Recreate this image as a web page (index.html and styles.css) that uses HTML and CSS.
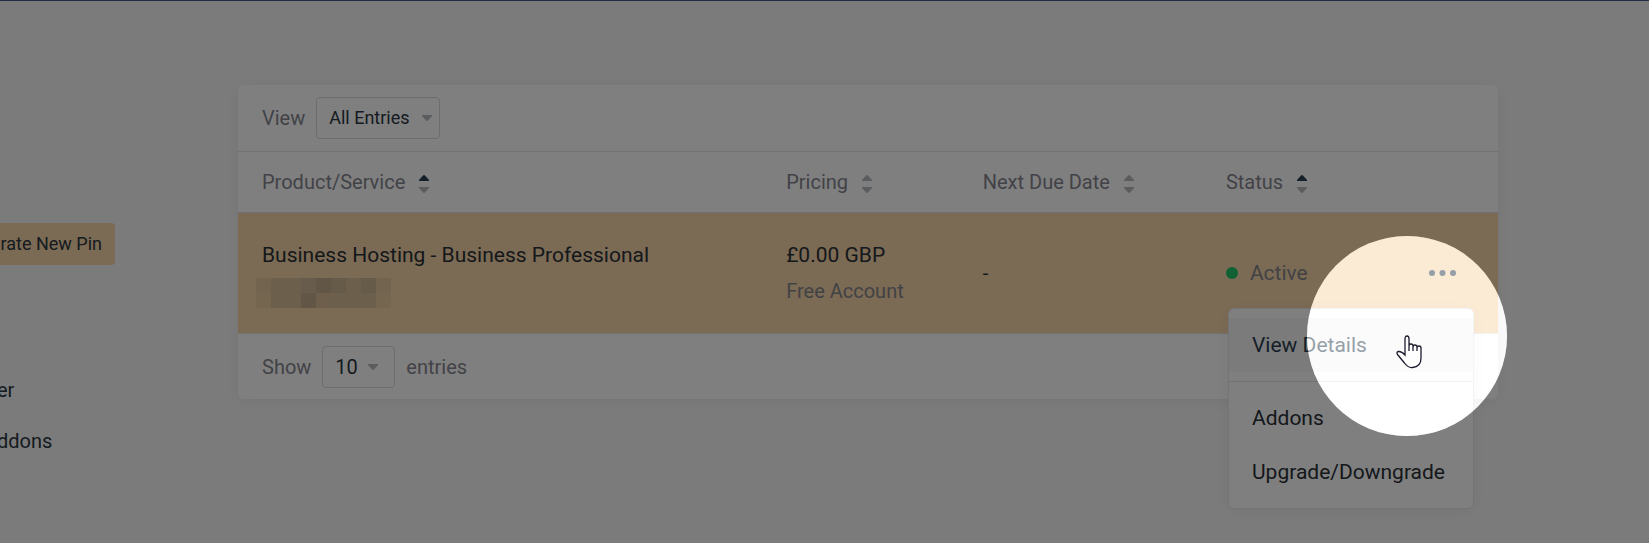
FILE: index.html
```html
<!DOCTYPE html>
<html lang="en">
<head>
    <meta charset="UTF-8">
    <meta name="viewport" content="width=device-width, initial-scale=1.0">
    <title>My Services</title>
    <link rel="stylesheet" href="styles.css">
</head>
<body>

    <div class="page">
        <aside class="sidebar">
            <button type="button" class="pin-btn">rate New Pin</button>
            <nav class="side-nav">
                <a href="#">er</a>
                <a href="#">ddons</a>
            </nav>
        </aside>

        <main class="card">
            <div class="toolbar">
                <label for="view">View</label>
                <div class="select select-view">
                    <select id="view">
                        <option>All Entries</option>
                    </select>
                    <svg class="caret" width="10" height="6" viewBox="0 0 10 6"><path d="M0 0v1l4 4.500q1 .8 2 0L10 1V0z"/></svg>
                </div>
            </div>

            <table class="services">
                <thead>
                    <tr>
                        <th class="col-product">Product/Service <svg class="sort asc" width="10" height="18" viewBox="0 0 10 18"><path class="up" d="M0 6V5l4-4.500q1-.8 2 0L10 5v1z"/><path class="down" d="M0 12v1l4 4.500q1 .8 2 0L10 13v-1z"/></svg></th>
                        <th class="col-pricing">Pricing <svg class="sort" width="10" height="18" viewBox="0 0 10 18"><path class="up" d="M0 6V5l4-4.500q1-.8 2 0L10 5v1z"/><path class="down" d="M0 12v1l4 4.500q1 .8 2 0L10 13v-1z"/></svg></th>
                        <th class="col-due">Next Due Date <svg class="sort" width="10" height="18" viewBox="0 0 10 18"><path class="up" d="M0 6V5l4-4.500q1-.8 2 0L10 5v1z"/><path class="down" d="M0 12v1l4 4.500q1 .8 2 0L10 13v-1z"/></svg></th>
                        <th class="col-status">Status <svg class="sort asc" width="10" height="18" viewBox="0 0 10 18"><path class="up" d="M0 6V5l4-4.500q1-.8 2 0L10 5v1z"/><path class="down" d="M0 12v1l4 4.500q1 .8 2 0L10 13v-1z"/></svg></th>
                    </tr>
                </thead>
                <tbody>
                    <tr>
                        <td>
                            <div class="name">Business Hosting - Business Professional</div>
                            <div class="domain">
                                <svg width="135" height="30" viewBox="0 0 135 30" shape-rendering="crispEdges">
                                    <path fill="#e4c89e" d="M0 0h15v15H0zM120 0h15v15h-15z"/>
                                    <path fill="#eacda0" d="M0 15h15v15H0zM120 15h15v15h-15z"/>
                                    <path fill="#d8c099" d="M15 0h30v30H15zM75 15h45v15H75zM90 0h15v15H90z"/>
                                    <path fill="#d0ba98" d="M45 0h15v15H45z"/>
                                    <path fill="#c4ae8f" d="M60 0h15v15H60zM45 15h15v15H45z"/>
                                    <path fill="#ccb692" d="M75 0h15v15H75zM105 0h15v15h-15z"/>
                                    <path fill="#dcbe98" d="M60 15h15v15H60z"/>
                                </svg>
                            </div>
                        </td>
                        <td>
                            <div class="name">£0.00 GBP</div>
                            <div class="note">Free Account</div>
                        </td>
                        <td>-</td>
                        <td class="status-cell">
                            <div class="status">
                                <span class="dot"></span>
                                <span class="note name">Active</span>
                                <button type="button" class="more" aria-label="Actions"><svg width="27" height="6" viewBox="0 0 27 6"><circle cx="3" cy="3" r="3"/><circle cx="13.500" cy="3" r="3"/><circle cx="24" cy="3" r="3"/></svg></button>
                            </div>
                            <div class="menu">
                                <a href="#" class="active">View Details</a>
                                <hr>
                                <a href="#">Addons</a>
                                <a href="#">Upgrade/Downgrade</a>
                            </div>
                            <div class="spotlight"></div>
                            <svg class="pointer" width="26" height="34" viewBox="0 0 26 34"><path d="M9 20V4Q9 1 11 1t2 3v12V11q0-2 2-2t2 2v5v-4q0-2 2-2t2 2v4v-3q0-2 2-2t2 2V23q0 9-8.500 9.500Q12 33 8.500 28L1.500 19.500Q0 17 2.500 16.500q3-.3 6.500 3.500z"/></svg>
                        </td>
                    </tr>
                </tbody>
            </table>

            <div class="footer">
                <label for="length">Show</label>
                <div class="select select-length">
                    <select id="length">
                        <option>10</option>
                    </select>
                    <svg class="caret" width="10" height="6" viewBox="0 0 10 6"><path d="M0 0v1l4 4.500q1 .8 2 0L10 1V0z"/></svg>
                </div>
                <span>entries</span>
            </div>
        </main>
    </div>

</body>
</html>
```

FILE: styles.css
```css
*{
    margin: 0;
    padding: 0;
    box-sizing: border-box;
}
body{
    min-height: 100vh;
    overflow: hidden;
    background-color: #f7f7f7;
    border-top: 1px solid #242c48;
    font-family: Roboto, sans-serif;
    font-size: 20px;
    color: #2a3640;
}
a{
    color: inherit;
    text-decoration: none;
}
button, select{
    font-family: inherit;
    color: inherit;
    border: none;
    cursor: pointer;
}
.page{
    display: flex;
    align-items: flex-start;
    gap: 123px;
    padding: 84px 151px 0 0;
}

/* sidebar */
.sidebar{
    flex: 0 0 115px;
    padding-top: 138px;
}
.pin-btn{
    width: 100%;
    height: 42px;
    padding: 0 13px 2px 0;
    background-color: #f7d5a9;
    border-radius: 0 4px 4px 0;
    font-size: 18px;
    text-align: right;
    white-space: nowrap;
}
.side-nav{
    margin: 100px 0 0 -3px;
}
.side-nav a{
    display: block;
    line-height: 51px;
}

/* services card */
.card{
    flex: 1;
    background-color: #fff;
    border-radius: 6px;
    box-shadow: 0 2px 16px rgba(0, 0, 0, 0.06);
    color: #85858f;
}
.toolbar, .footer{
    display: flex;
    align-items: center;
    gap: 11px;
    height: 66px;
    padding: 0 24px;
}
.footer{
    height: 65px;
}
.select{
    position: relative;
}
.select select{
    display: block;
    width: 100%;
    height: 42px;
    padding-left: 12px;
    background-color: #fff;
    border: 1px solid #dadada;
    border-radius: 4px;
    appearance: none;
    color: #2a3640;
}
.select-view{
    width: 124px;
}
.select-view select{
    padding-bottom: 2px;
    font-size: 18px;
}
.select-length{
    width: 73px;
}
.select-length select{
    font-size: 20px;
}
.caret{
    position: absolute;
    top: 18px;
    right: 8px;
    fill: #b4b8bc;
    pointer-events: none;
}
.select-length .caret{
    right: 17px;
}
.services{
    width: 100%;
    table-layout: fixed;
    border-collapse: separate;
    border-spacing: 0;
}
.services th{
    height: 62px;
    padding: 0 24px;
    border-top: 1px solid #e4e4e6;
    border-bottom: 1px solid #dfe2e6;
    text-align: left;
    font-weight: 400;
}
.col-product{
    width: 41.6%;
}
.col-pricing{
    width: 15.6%;
}
.col-due{
    width: 19.3%;
}
.sort{
    margin-left: 9px;
    vertical-align: middle;
    fill: #b4b8bc;
}
.sort.asc .up{
    fill: #2a3f50;
}
.services td{
    height: 121px;
    padding: 0 24px;
    background-color: #f7d5a9;
    border-bottom: 1px solid #e8e4e0;
    line-height: 36px;
    color: #2a3036;
}
.name{
    font-size: 21px;
}
.services .note{
    color: #85858a;
}
.domain{
    height: 36px;
    padding-top: 5px;
    margin-left: -6px;
    line-height: 0;
}
.services .status-cell{
    position: relative;
}
.status{
    display: flex;
    align-items: center;
    gap: 12px;
}
.dot{
    width: 12px;
    height: 12px;
    background-color: #20c468;
    border-radius: 50%;
}
.more{
    margin-left: auto;
    margin-right: 18px;
    background: none;
    line-height: 0;
}
.more svg{
    fill: #2a3f50;
}

/* actions menu */
.menu{
    position: absolute;
    top: 95px;
    right: 24px;
    z-index: 1;
    width: 246px;
    padding: 9px 0;
    background-color: #fff;
    border: 1px solid #e6e8ea;
    border-radius: 6px;
    box-shadow: 0 2px 16px rgba(0, 0, 0, 0.06);
    font-size: 21px;
    line-height: 54px;
}
.menu a{
    display: block;
    padding: 0 23px;
}
.menu .active{
    background-color: #f6f6f6;
    color: #2a3f50;
}
.menu hr{
    margin: 9px 0;
    border: none;
    border-top: 1px solid #e2e4e6;
}

/* dims everything around the highlighted action */
.spotlight{
    position: absolute;
    top: 23px;
    right: -9px;
    z-index: 2;
    width: 200px;
    height: 200px;
    background-color: rgba(255, 255, 255, 0.5);
    border-radius: 50%;
    box-shadow: 0 0 0 3000px rgba(0, 0, 0, 0.5);
    pointer-events: none;
}
.pointer{
    position: absolute;
    top: 122px;
    right: 76px;
    z-index: 3;
    fill: #fff;
    stroke: #1c1a2c;
    stroke-width: 1.3;
    pointer-events: none;
}
```
